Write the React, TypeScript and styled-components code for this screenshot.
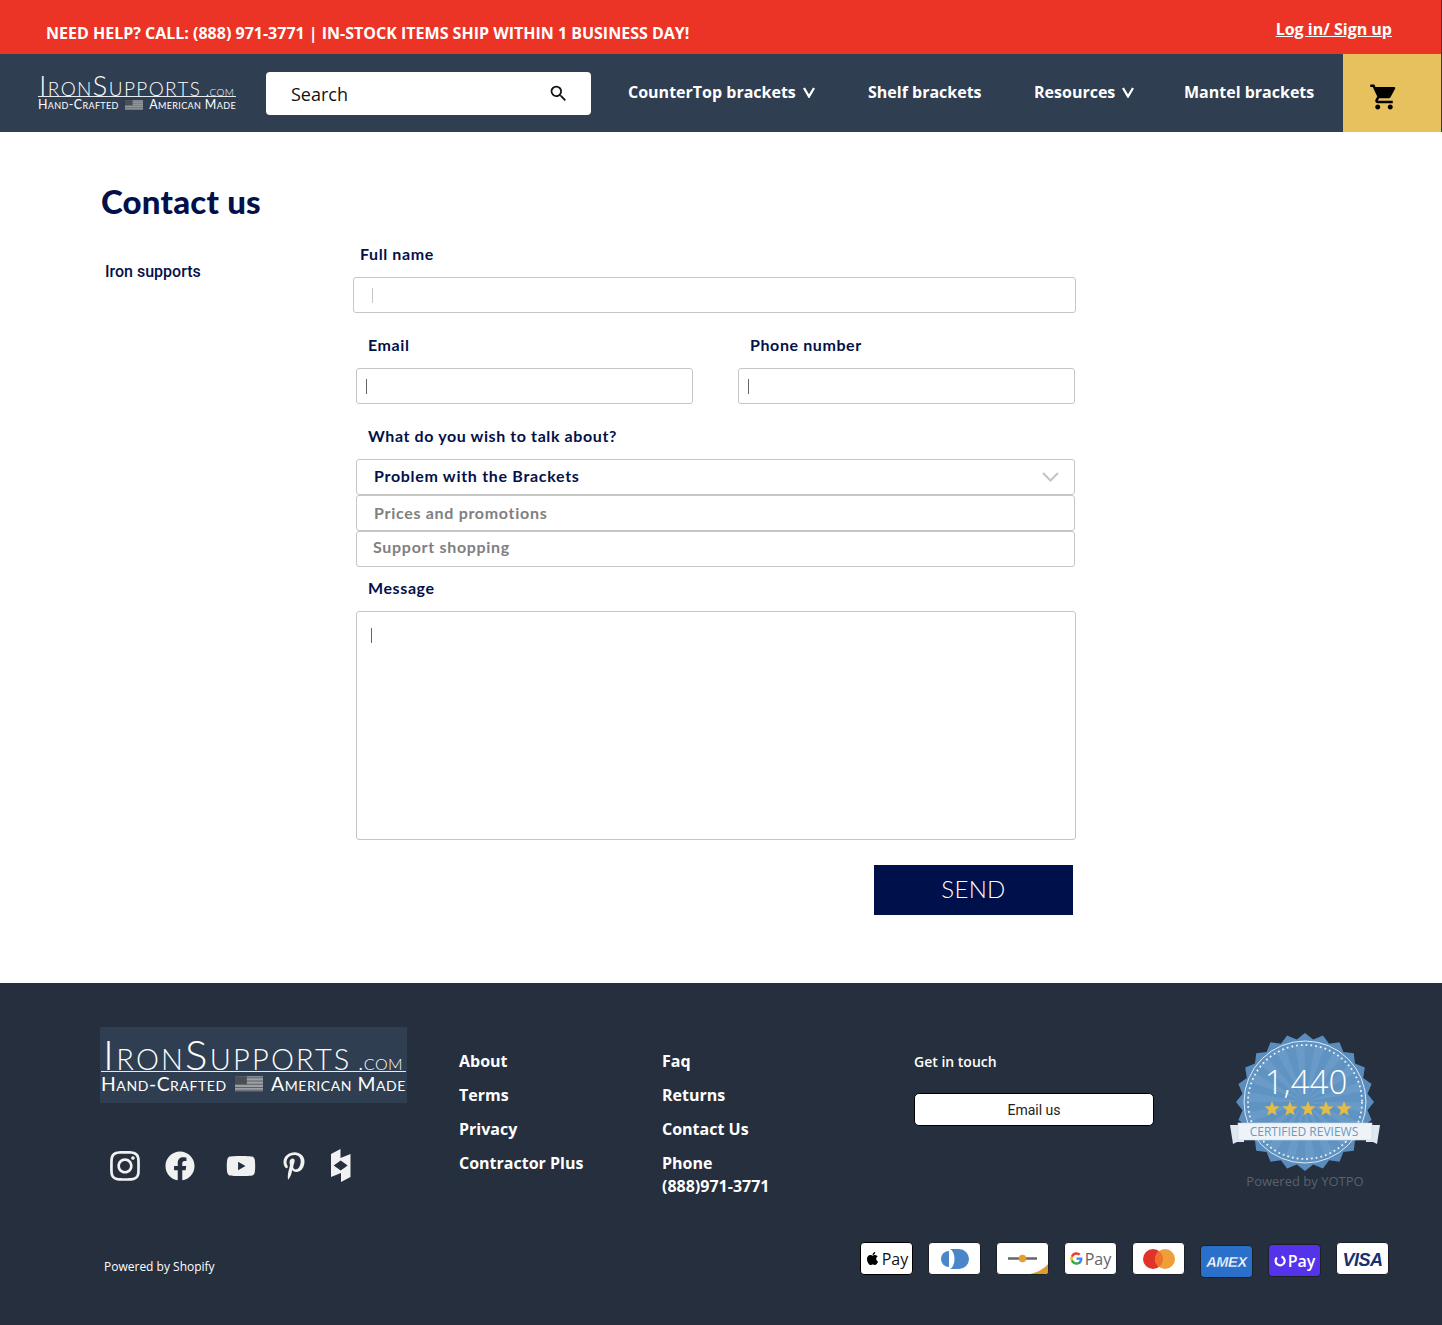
import { FC } from "react";
import styled, { createGlobalStyle } from "styled-components";
import { FaFacebook, FaInstagram, FaPinterestP, FaYoutube, FaApple } from "react-icons/fa";
import { MdSearch, MdShoppingCart } from "react-icons/md";

const navy = "#03114a";

const GlobalStyle = createGlobalStyle`
  html, body {
    margin: 0;
    padding: 0;
    background: #fff;
    font-family: "Open Sans", sans-serif;
  }
  * {
    box-sizing: border-box;
  }
`;

const TopBar = styled.div`
  height: 54px;
  background: #ec3426;
  border-right: 1px solid #2f3e50;
  color: #fff;
  display: flex;
  justify-content: space-between;
  padding: 0 49px 0 46px;
  font-weight: 700;
  font-size: 16px;
`;

const Notice = styled.div`
  padding-top: 22px;
  line-height: 22px;
`;

const LoginLink = styled.a`
  padding-top: 18px;
  line-height: 22px;
  text-decoration: underline;
`;

const Header = styled.header`
  height: 78px;
  background: #2f3e50;
  display: flex;
  padding-left: 38px;
`;

const LogoBox = styled.div<{ $size: number; $width: number }>`
  width: ${({ $width }) => $width}px;
  font-size: ${({ $size }) => $size}px;
  color: #fff;
  font-family: Lato, sans-serif;
  font-weight: 300;
  font-variant: small-caps;
  line-height: 1;
`;

const LogoTop = styled.div`
  border-bottom: 1px solid #e8ebee;
  white-space: nowrap;
  display: flex;
  align-items: baseline;
  justify-content: space-between;
  padding: 0 0.07em 0 0.05em;
  height: 0.92em;
`;

const LogoName = styled.span`
  letter-spacing: 0.052em;
`;

const LogoCom = styled.span`
  font-size: 0.55em;
  letter-spacing: 0.02em;
`;

const LogoBottom = styled.div`
  display: flex;
  justify-content: space-between;
  align-items: center;
  font-size: 0.46em;
  font-weight: 400;
  letter-spacing: 0.03em;
  margin-top: 0.14em;
  white-space: nowrap;
`;

const Flag = styled.svg`
  width: 1.45em;
  height: 0.8em;
`;

const Logo: FC<{ size: number; width: number }> = ({ size, width }) => (
  <LogoBox $size={size} $width={width}>
    <LogoTop>
      <LogoName>IronSupports</LogoName>
      <LogoCom>.com</LogoCom>
    </LogoTop>
    <LogoBottom>
      <span>Hand-Crafted</span>
      <Flag viewBox="0 0 26 14">
        <rect width="26" height="14" fill="#9aa0a6" />
        <path d="M0 1.5h26M0 4.5h26M0 7.5h26M0 10.5h26M0 13h26" stroke="#5d6266" strokeWidth="1" />
        <rect width="11" height="7.5" fill="#4a4f54" />
      </Flag>
      <span>American Made</span>
    </LogoBottom>
  </LogoBox>
);

const HeaderLogo = styled.div`
  padding-top: 18px;
`;

const SearchBox = styled.div`
  width: 325px;
  height: 43px;
  margin: 18px 0 0 30px;
  background: #fff;
  border-radius: 4px;
  display: flex;
  align-items: center;
  justify-content: space-between;
  padding: 0 22px 0 25px;
  font-size: 18px;
  color: #111;
`;

const Nav = styled.nav`
  display: flex;
  align-items: flex-start;
  margin-left: 37px;
  padding-top: 27px;
`;

const NavItem = styled.a<{ $width: number }>`
  width: ${({ $width }) => $width}px;
  display: flex;
  align-items: center;
  gap: 7px;
  color: #fff;
  font-weight: 700;
  font-size: 16px;
  line-height: 22px;
  white-space: nowrap;
`;

const NavChevron = () => (
  <svg width="12" height="11" viewBox="0 0 12 11" fill="none">
    <path d="M1 1l5 8.500L11 1" stroke="#fff" strokeWidth="2.300" />
  </svg>
);

const CartButton = styled.div`
  width: 98px;
  margin-left: auto;
  margin-right: 1px;
  background: #e6c15d;
  display: flex;
  align-items: center;
  justify-content: center;
  padding-top: 7px;
  padding-right: 16px;
  color: #000;
`;

const Main = styled.main`
  height: 851px;
  padding: 50px 0 0 101px;
`;

const Title = styled.h1`
  margin: 0 0 23px;
  font-family: Lato, sans-serif;
  font-weight: 900;
  font-size: 33px;
  letter-spacing: 0.2px;
  line-height: 38px;
  color: ${navy};
`;

const ContactGrid = styled.div`
  display: grid;
  grid-template-columns: 252px 723px;
`;

const SideLabel = styled.div`
  padding: 18px 0 0 4px;
  font-family: Roboto, sans-serif;
  font-weight: 500;
  font-size: 16px;
  line-height: 22px;
  color: ${navy};
`;

const FormColumn = styled.form`
  display: flex;
  flex-direction: column;
`;

const Label = styled.div<{ $indent: number; $top?: number }>`
  margin: ${({ $top }) => ($top ?? 21) - 1}px 0 12px ${({ $indent }) => $indent}px;
  font-family: Lato, sans-serif;
  font-weight: 700;
  font-size: 16px;
  letter-spacing: 0.6px;
  line-height: 23px;
  color: ${navy};
`;

const FullNameLabel = styled(Label)`
  margin-top: 0;
  margin-bottom: 11px;
  height: 23px;
  line-height: 21px;
`;

const Field = styled.div<{ $indent?: number; $width?: number; $height?: number; $pad?: number }>`
  margin-left: ${({ $indent }) => $indent ?? 0}px;
  width: ${({ $width }) => ($width ? `${$width}px` : "auto")};
  height: ${({ $height }) => $height ?? 36}px;
  padding-left: ${({ $pad }) => $pad ?? 9}px;
  display: flex;
  align-items: center;
  justify-content: space-between;
  border: 1px solid #c6c6c6;
  border-radius: 3px;
  background: #fff;
`;

const MessageField = styled(Field)`
  align-items: flex-start;
  padding-top: 16px;
`;

const Caret = styled.i<{ $light?: boolean }>`
  display: block;
  width: 1px;
  height: 15px;
  background: ${({ $light }) => ($light ? "#c4c4c4" : "#666")};
`;

const TwoColumns = styled.div`
  display: grid;
  grid-template-columns: 337px 337px;
  column-gap: 45px;
  padding-left: 3px;
`;

const OptionText = styled.span<{ $muted?: boolean; $lift: number }>`
  margin-bottom: ${({ $lift }) => $lift}px;
  font-family: Lato, sans-serif;
  font-weight: 700;
  font-size: 16px;
  letter-spacing: 0.7px;
  color: ${({ $muted }) => ($muted ? "#808080" : navy)};
`;

const SelectChevron = styled.svg`
  margin-right: 15px;
`;

const FormActions = styled.div`
  display: flex;
  justify-content: flex-end;
  margin-top: 25px;
  padding-right: 3px;
`;

const SendButton = styled.button`
  width: 199px;
  height: 50px;
  border: 0;
  padding: 0 0 4px;
  background: #00104a;
  color: #fff;
  font-family: Lato, sans-serif;
  font-weight: 300;
  font-size: 24px;
  letter-spacing: 0.3px;
`;

const Footer = styled.footer`
  height: 342px;
  background: #252f3e;
  padding: 44px 53px 0 100px;
  color: #fff;
`;

const FooterTop = styled.div`
  display: flex;
  height: 195px;
`;

const BrandColumn = styled.div`
  width: 359px;
`;

const FooterLogo = styled.div`
  width: 307px;
  height: 76px;
  background: #2f3e50;
  padding: 6px 0 0 1px;
`;

const Socials = styled.div`
  display: flex;
  align-items: center;
  margin: 46px 0 0 8px;
  height: 33px;
`;

const SocialIcon = styled.a<{ $width: number }>`
  width: ${({ $width }) => $width}px;
  display: flex;
  align-items: center;
  color: #f1f1f1;
`;

const LinkColumn = styled.div<{ $width: number }>`
  width: ${({ $width }) => $width}px;
  padding-top: 23px;
  display: flex;
  flex-direction: column;
`;

const FooterLink = styled.a`
  font-weight: 700;
  font-size: 16px;
  line-height: 23px;
  margin-bottom: 11px;
`;

const PhoneLink = styled(FooterLink)`
  margin-bottom: 0;
`;

const TouchColumn = styled.div`
  width: 316px;
  padding-top: 25px;
`;

const TouchTitle = styled.div`
  font-weight: 600;
  font-size: 14px;
  line-height: 20px;
  margin-bottom: 21px;
`;

const EmailButton = styled.button`
  width: 240px;
  height: 33px;
  background: #fff;
  border: 1px solid #000;
  border-radius: 5px;
  font-family: Roboto, sans-serif;
  font-size: 14px;
  color: #222;
`;

const BadgeColumn = styled.div`
  width: 150px;
  display: flex;
  flex-direction: column;
  align-items: center;
  margin-top: 6px;
`;

const YotpoText = styled.div`
  font-size: 13px;
  line-height: 18px;
  color: #59616d;
`;

const FooterBottom = styled.div`
  display: flex;
  justify-content: space-between;
  align-items: flex-start;
  padding: 20px 0 0 4px;
`;

const ShopifyText = styled.div`
  padding-top: 15px;
  font-size: 12px;
  line-height: 20px;
`;

const PayRow = styled.div`
  display: flex;
  gap: 15px;
`;

const PayCard = styled.div<{ $bg?: string; $drop?: number; $edge?: string }>`
  width: 53px;
  height: 33px;
  margin-top: ${({ $drop }) => $drop ?? 0}px;
  background: ${({ $bg }) => $bg ?? "#fff"};
  border: 1px solid ${({ $edge }) => $edge ?? "#1a1f28"};
  border-radius: 4px;
  display: flex;
  align-items: center;
  justify-content: center;
  gap: 2px;
  overflow: hidden;
  font-family: "Open Sans", sans-serif;
  font-size: 16px;
`;

const PayText = styled.span<{ $color?: string; $strong?: boolean }>`
  color: ${({ $color }) => $color ?? "#111"};
  font-weight: ${({ $strong }) => ($strong ? 600 : 400)};
`;

const AmexText = styled.span`
  font-family: "Liberation Sans", sans-serif;
  font-weight: 700;
  font-style: italic;
  font-size: 14.500px;
  color: #fff;
  -webkit-text-stroke: 0.3px #2a6fca;
  letter-spacing: -0.3px;
`;

const VisaText = styled.span`
  padding-top: 3px;
  font-family: "Liberation Sans", sans-serif;
  font-weight: 700;
  font-style: italic;
  font-size: 18px;
  letter-spacing: -0.5px;
  color: #17306f;
`;

const badgePoints = () => {
  const pts: string[] = [];
  const teeth = 24;
  for (let i = 0; i < teeth * 2; i++) {
    const r = i % 2 === 0 ? 69 : 63;
    const a = (Math.PI * i) / teeth - Math.PI / 2;
    pts.push(`${(75 + r * Math.cos(a)).toFixed(1)},${(69 + r * Math.sin(a)).toFixed(1)}`);
  }
  return pts.join(" ");
};

const starPoints = (cx: number, cy: number, r: number) => {
  const pts: string[] = [];
  for (let i = 0; i < 10; i++) {
    const rr = i % 2 === 0 ? r : r * 0.42;
    const a = (Math.PI * i) / 5 - Math.PI / 2;
    pts.push(`${(cx + rr * Math.cos(a)).toFixed(1)},${(cy + rr * Math.sin(a)).toFixed(1)}`);
  }
  return pts.join(" ");
};

const rays = Array.from({ length: 18 }, (_, i) => (Math.PI * i) / 9);

const Badge = () => (
  <svg width="150" height="139" viewBox="0 0 150 139">
    <polygon points={badgePoints()} fill="#5a8dbd" />
    <circle cx="75" cy="69" r="61" fill="#5f93c2" stroke="#dfe9f2" strokeWidth="1" />
    {rays.map((a) => (
      <polygon
        key={a}
        points={`75,69 ${75 + 58 * Math.cos(a)},${69 + 58 * Math.sin(a)} ${75 + 58 * Math.cos(a + 0.17)},${69 + 58 * Math.sin(a + 0.17)}`}
        fill="#6a9bc8"
      />
    ))}
    <circle cx="75" cy="69" r="57" fill="none" stroke="#eef3f8" strokeWidth="1.8" strokeDasharray="1.8 3" />
    <text x="76" y="61" textAnchor="middle" fontFamily="Open Sans, sans-serif" fontWeight="300" fontSize="33" fill="#fff">
      1,440
    </text>
    {[42, 60, 78, 96, 114].map((x) => (
      <polygon key={x} points={starPoints(x, 76, 8)} fill="#e5bd45" />
    ))}
    <polygon points="0,92 14,92 14,109 7,109 3,111" fill="#dfe8f0" />
    <polygon points="150,92 136,92 136,109 143,109 147,111" fill="#dfe8f0" />
    <rect x="8" y="90" width="134" height="17" fill="#eef3f8" stroke="#c6d6e4" strokeWidth="0.6" />
    <text x="74" y="103" textAnchor="middle" fontFamily="Open Sans, sans-serif" fontSize="12" fill="#6b97c2">
      CERTIFIED REVIEWS
    </text>
  </svg>
);

const GoogleG = () => (
  <svg width="13" height="13" viewBox="0 0 24 24">
    <path d="M23 12.3c0-.8-.1-1.6-.2-2.3H12v4.4h6.2c-.3 1.4-1.1 2.6-2.3 3.4v2.9h3.7c2.2-2 3.4-5 3.4-8.4z" fill="#4285f4" />
    <path d="M12 23.5c3.1 0 5.7-1 7.6-2.8l-3.7-2.9c-1 .7-2.3 1.1-3.9 1.1-3 0-5.5-2-6.4-4.8H1.8v3C3.7 21 7.6 23.5 12 23.5z" fill="#34a853" />
    <path d="M5.6 14.1a6.9 6.9 0 010-4.4v-3H1.8a11.500 11.500 0 000 10.400z" fill="#fbbc05" />
    <path d="M12 4.900c1.700 0 3.200.6 4.400 1.700l3.300-3.300A11.500 11.500 0 001.800 6.700l3.800 3C6.500 6.900 9 4.900 12 4.900z" fill="#ea4335" />
  </svg>
);

const HouzzIcon: FC<{ size: number }> = ({ size }) => (
  <svg width={(size * 20) / 33} height={size} viewBox="0 0 20 33" fill="currentColor">
    <path
      fillRule="evenodd"
      d="M0 5L9.500 0V9L19.500 5V28L10 33V24L0 28ZM9.700 11.500L2.700 16.500L9.700 21.500L16.700 16.500Z"
    />
  </svg>
);

const socialIcons = [
  { Icon: FaInstagram, size: 34, width: 57 },
  { Icon: FaFacebook, size: 30, width: 61 },
  { Icon: FaYoutube, size: 30, width: 54 },
  { Icon: FaPinterestP, size: 28, width: 51 },
  { Icon: HouzzIcon, size: 33, width: 30 },
];

export default function App() {
  return (
    <>
      <GlobalStyle />
      <TopBar>
        <Notice>NEED HELP? CALL: (888) 971-3771 | IN-STOCK ITEMS SHIP WITHIN 1 BUSINESS DAY!</Notice>
        <LoginLink>Log in/ Sign up</LoginLink>
      </TopBar>
      <Header>
        <HeaderLogo>
          <Logo size={27} width={198} />
        </HeaderLogo>
        <SearchBox>
          Search
          <MdSearch size={21} color="#111" />
        </SearchBox>
        <Nav>
          <NavItem $width={240}>
            CounterTop brackets <NavChevron />
          </NavItem>
          <NavItem $width={166}>Shelf brackets</NavItem>
          <NavItem $width={150}>
            Resources <NavChevron />
          </NavItem>
          <NavItem $width={131}>Mantel brackets</NavItem>
        </Nav>
        <CartButton>
          <MdShoppingCart size={30} />
        </CartButton>
      </Header>
      <Main>
        <Title>Contact us</Title>
        <ContactGrid>
          <SideLabel>Iron supports</SideLabel>
          <FormColumn>
            <FullNameLabel $indent={7}>Full name</FullNameLabel>
            <Field $pad={18}>
              <Caret $light />
            </Field>
            <TwoColumns>
              <div>
                <Label $indent={12}>Email</Label>
                <Field>
                  <Caret />
                </Field>
              </div>
              <div>
                <Label $indent={12}>Phone number</Label>
                <Field>
                  <Caret />
                </Field>
              </div>
            </TwoColumns>
            <Label $indent={15}>What do you wish to talk about?</Label>
            <Field $indent={3} $width={719} $pad={17}>
              <OptionText $lift={4}>Problem with the Brackets</OptionText>
              <SelectChevron width="17" height="10" viewBox="0 0 17 10" fill="none">
                <path d="M1 1l7.500 7.500L16 1" stroke="#c4c4c4" strokeWidth="2" />
              </SelectChevron>
            </Field>
            <Field $indent={3} $width={719} $pad={17}>
              <OptionText $muted $lift={2}>
                Prices and promotions
              </OptionText>
            </Field>
            <Field $indent={3} $width={719} $pad={16}>
              <OptionText $muted $lift={6}>
                Support shopping
              </OptionText>
            </Field>
            <Label $indent={15} $top={10}>
              Message
            </Label>
            <MessageField $indent={3} $width={720} $height={229} $pad={14}>
              <Caret />
            </MessageField>
            <FormActions>
              <SendButton type="button">SEND</SendButton>
            </FormActions>
          </FormColumn>
        </ContactGrid>
      </Main>
      <Footer>
        <FooterTop>
          <BrandColumn>
            <FooterLogo>
              <Logo size={42} width={305} />
            </FooterLogo>
            <Socials>
              {socialIcons.map(({ Icon, size, width }) => (
                <SocialIcon key={width} $width={width}>
                  <Icon size={size} />
                </SocialIcon>
              ))}
            </Socials>
          </BrandColumn>
          <LinkColumn $width={203}>
            <FooterLink>About</FooterLink>
            <FooterLink>Terms</FooterLink>
            <FooterLink>Privacy</FooterLink>
            <FooterLink>Contractor Plus</FooterLink>
          </LinkColumn>
          <LinkColumn $width={252}>
            <FooterLink>Faq</FooterLink>
            <FooterLink>Returns</FooterLink>
            <FooterLink>Contact Us</FooterLink>
            <PhoneLink>Phone</PhoneLink>
            <PhoneLink>(888)971-3771</PhoneLink>
          </LinkColumn>
          <TouchColumn>
            <TouchTitle>Get in touch</TouchTitle>
            <EmailButton type="button">Email us</EmailButton>
          </TouchColumn>
          <BadgeColumn>
            <Badge />
            <YotpoText>Powered by YOTPO</YotpoText>
          </BadgeColumn>
        </FooterTop>
        <FooterBottom>
          <ShopifyText>Powered by Shopify</ShopifyText>
          <PayRow>
            <PayCard $edge="#000">
              <FaApple size={15} color="#000" />
              <PayText>Pay</PayText>
            </PayCard>
            <PayCard>
              <svg width="28" height="22" viewBox="0 0 28 22">
                <path d="M8 3A8 8 0 0 0 8 19Z" fill="#4a86c8" />
                <path d="M9 1H18A10 10 0 0 1 18 21H9C15 18 15 4 9 1Z" fill="#4a86c8" />
              </svg>
            </PayCard>
            <PayCard>
              <svg width="51" height="31" viewBox="0 0 51 31">
                <path d="M11 15.500h29" stroke="#666" strokeWidth="2.500" />
                <circle cx="25.500" cy="15.500" r="3.800" fill="#e89c2c" />
                <path d="M33 31c8-2 14-5 18-10v10z" fill="#e09a30" />
              </svg>
            </PayCard>
            <PayCard>
              <GoogleG />
              <PayText $color="#5f6368">Pay</PayText>
            </PayCard>
            <PayCard>
              <svg width="32" height="20" viewBox="0 0 32 20">
                <circle cx="10" cy="10" r="10" fill="#e0342b" />
                <circle cx="22" cy="10" r="10" fill="#ef9f3a" />
                <path d="M16 2a10 10 0 010 16 10 10 0 010-16z" fill="#f0702c" />
              </svg>
            </PayCard>
            <PayCard $bg="#2a6fca" $drop={3}>
              <AmexText>AMEX</AmexText>
            </PayCard>
            <PayCard $bg="#5433eb" $drop={2}>
              <svg width="12" height="12" viewBox="0 0 12 12" fill="none">
                <path d="M7.500 1.600A4.500 4.500 0 1 1 3 2.600" stroke="#fff" strokeWidth="2.200" />
              </svg>
              <PayText $color="#fff" $strong>
                Pay
              </PayText>
            </PayCard>
            <PayCard>
              <VisaText>VISA</VisaText>
            </PayCard>
          </PayRow>
        </FooterBottom>
      </Footer>
    </>
  );
}
